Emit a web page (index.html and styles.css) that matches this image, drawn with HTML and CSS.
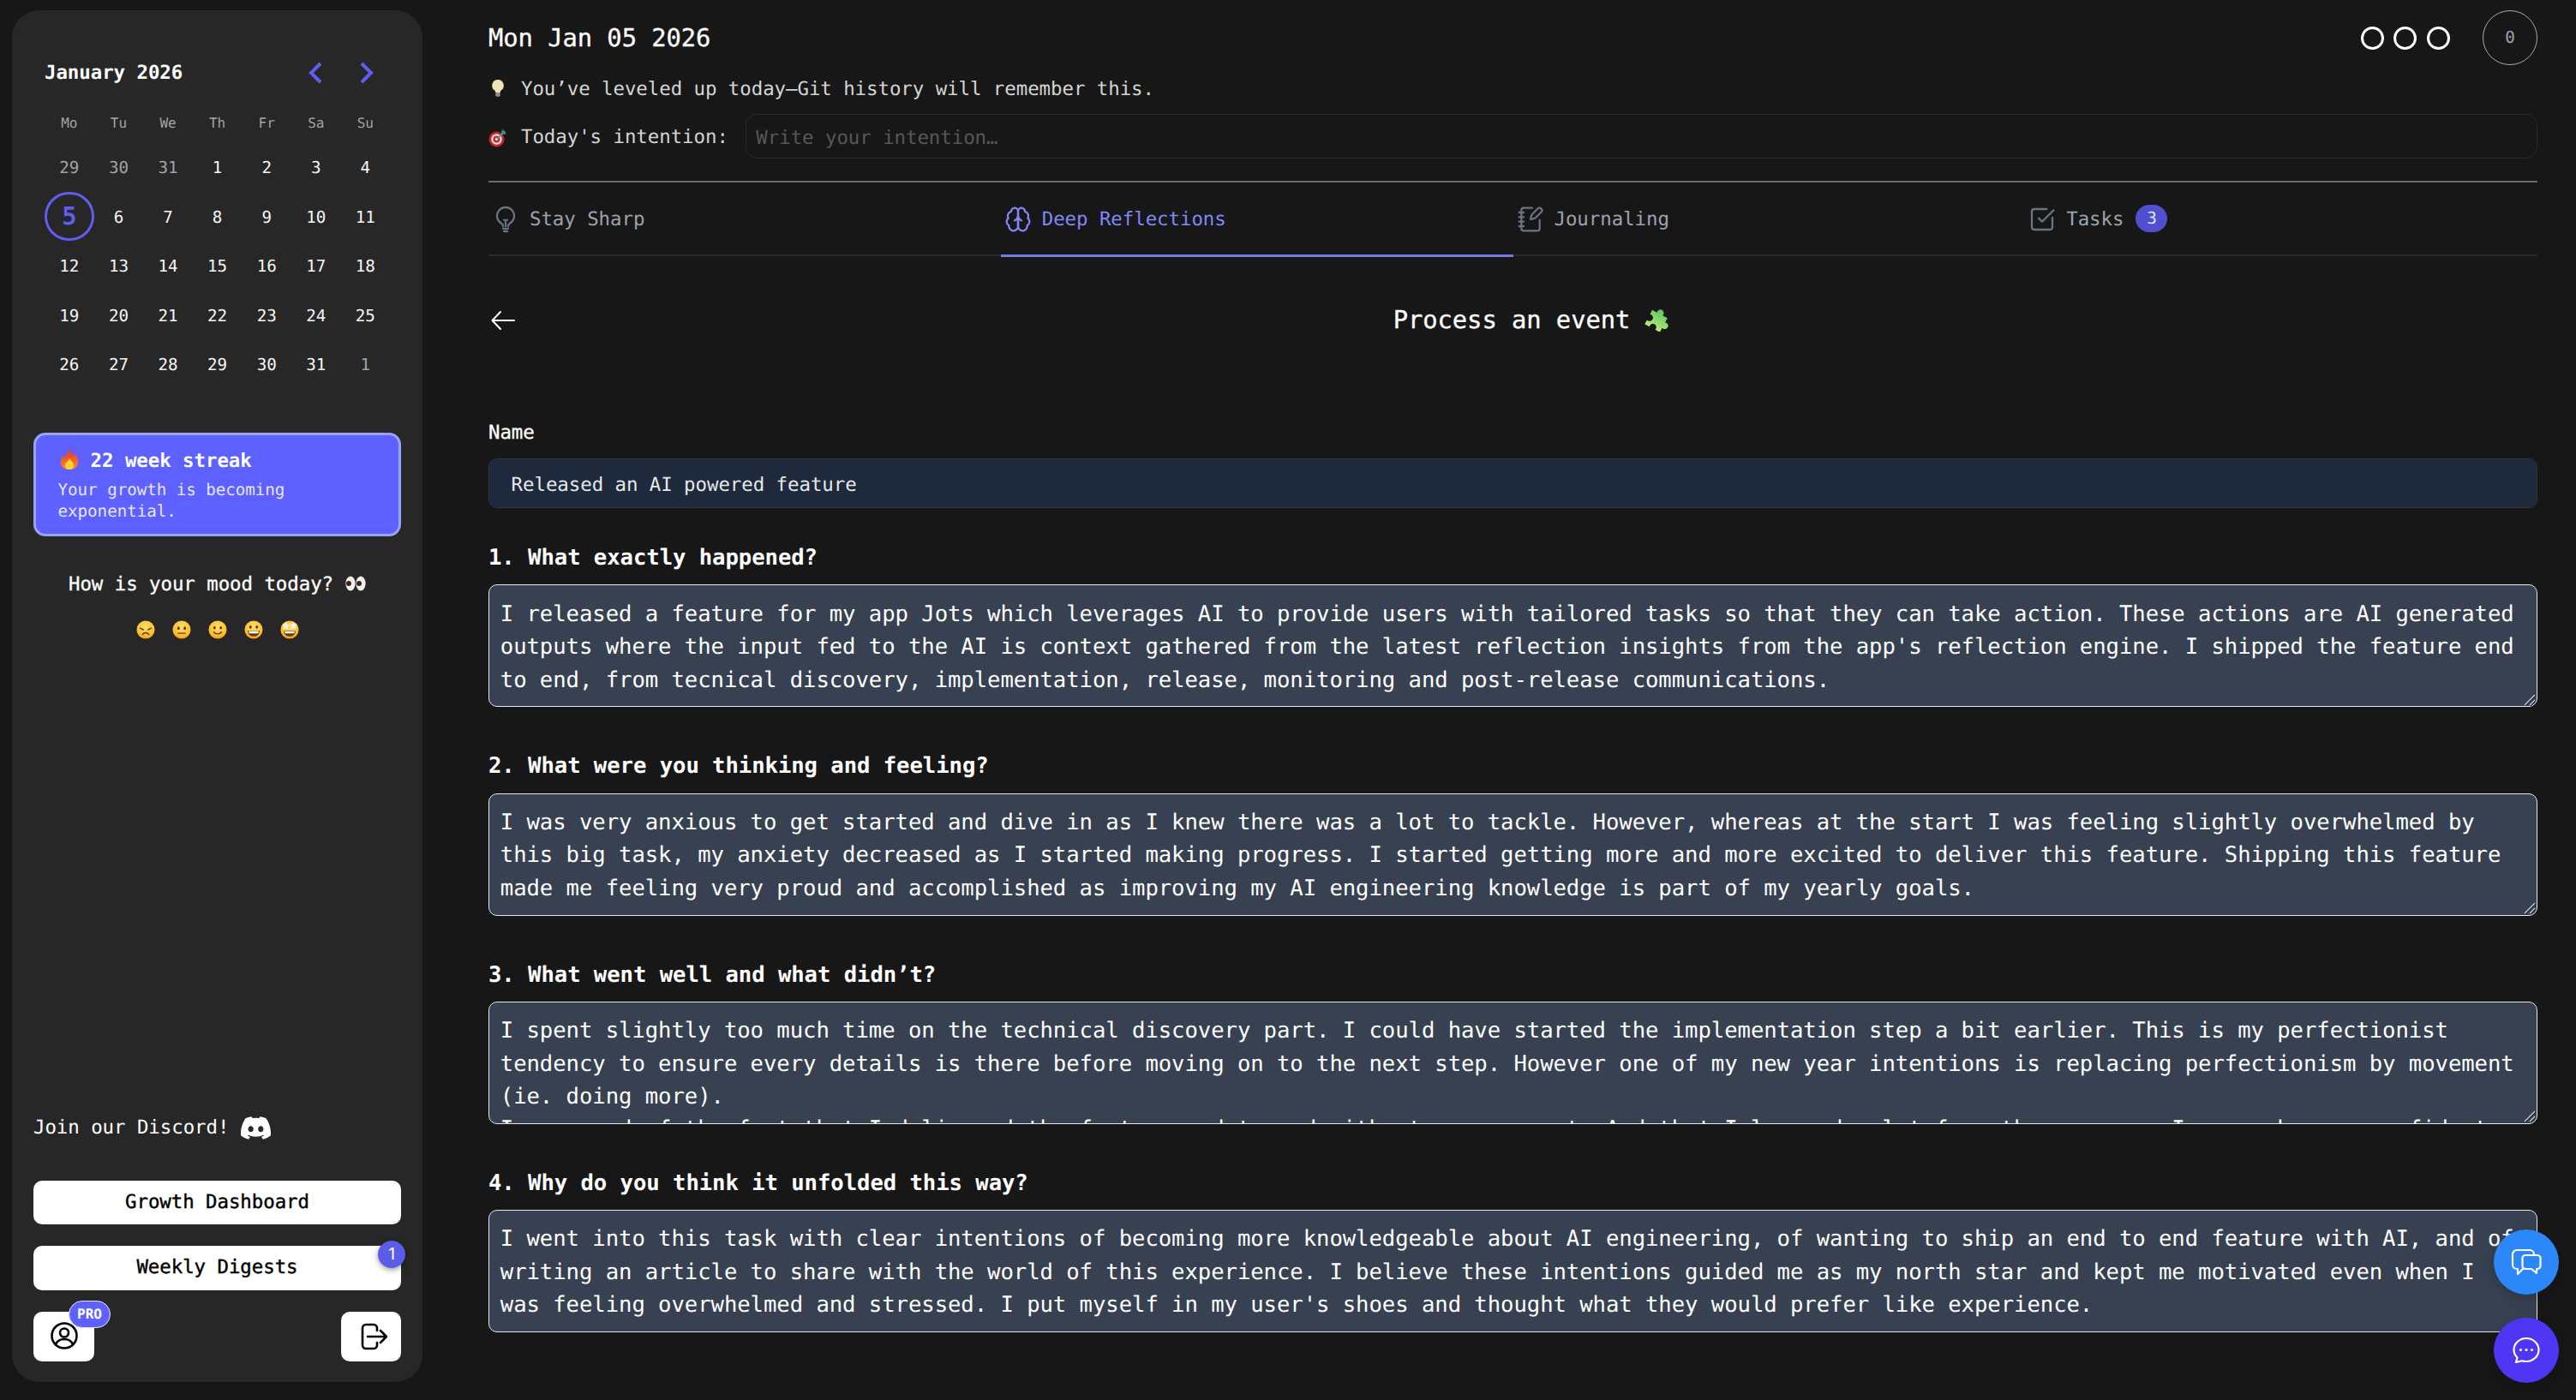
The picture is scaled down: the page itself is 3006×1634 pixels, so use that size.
FILE: index.html
```html
<!DOCTYPE html>
<html lang="en">
<head>
<meta charset="utf-8">
<title>Jots</title>
<link rel="stylesheet" href="styles.css">
</head>
<body>
<svg class="defs" width="0" height="0" aria-hidden="true">
  <defs>
    <radialGradient id="face" cx="50%" cy="35%" r="70%"><stop offset="0" stop-color="#ffdf6b"/><stop offset="0.7" stop-color="#fbbf2e"/><stop offset="1" stop-color="#e88f12"/></radialGradient>
    <linearGradient id="flame" x1="0" y1="0" x2="0" y2="1"><stop offset="0" stop-color="#e8391f"/><stop offset="1" stop-color="#ff8a1f"/></linearGradient>
    <linearGradient id="piece" x1="0" y1="0" x2="0" y2="1"><stop offset="0" stop-color="#5fc163"/><stop offset="1" stop-color="#b4ee72"/></linearGradient>
    <symbol id="grip" viewBox="0 0 14 14"><path d="M1 13 13 1M7 13l6-6" fill="none" stroke="#c9ccd2" stroke-width="1.300"/><path d="M2 14 14 2M8 14l6-6" fill="none" stroke="#1f2733" stroke-width="1"/></symbol>
  </defs>
</svg>
<aside class="sidebar">
  <section class="calendar">
    <div class="cal-head">
      <span class="cal-title">January 2026</span>
      <div class="cal-nav">
        <svg class="chev" viewBox="0 0 18 26"><path d="M15 2 4 13l11 11"/></svg>
        <svg class="chev" viewBox="0 0 18 26"><path d="m3 2 11 11L3 24"/></svg>
      </div>
    </div>
    <div class="cal-grid">
      <span class="wd">Mo</span><span class="wd">Tu</span><span class="wd">We</span><span class="wd">Th</span><span class="wd">Fr</span><span class="wd">Sa</span><span class="wd">Su</span>
      <span class="day out">29</span><span class="day out">30</span><span class="day out">31</span><span class="day">1</span><span class="day">2</span><span class="day">3</span><span class="day">4</span>
      <span class="day today">5</span><span class="day">6</span><span class="day">7</span><span class="day">8</span><span class="day">9</span><span class="day">10</span><span class="day">11</span>
      <span class="day">12</span><span class="day">13</span><span class="day">14</span><span class="day">15</span><span class="day">16</span><span class="day">17</span><span class="day">18</span>
      <span class="day">19</span><span class="day">20</span><span class="day">21</span><span class="day">22</span><span class="day">23</span><span class="day">24</span><span class="day">25</span>
      <span class="day">26</span><span class="day">27</span><span class="day">28</span><span class="day">29</span><span class="day">30</span><span class="day">31</span><span class="day out">1</span>
    </div>
  </section>
  <section class="streak">
    <div class="streak-title">
      <svg class="em-fire" viewBox="0 0 22 26"><path fill="url(#flame)" d="M11 1c1 4 3 5 5 8 1-1 1-2 1-3 3 3 4 7 4 10 0 6-4 9-10 9S1 22 1 16c0-4 2-6 4-8 0 2 0 3 1 4 1-4 3-7 5-11z"/><path fill="#ffd23f" d="M11 12c1 2 5 5 5 8 0 3-2 5-5 5s-5-2-5-5c0-3 4-5 5-8z"/></svg>
      <span>22 week streak</span>
    </div>
    <p class="streak-sub">Your growth is becoming exponential.</p>
  </section>
  <section class="mood">
    <div class="mood-title">How is your mood today?
      <svg class="em-eyes" viewBox="0 0 24 18"><ellipse cx="6" cy="9" rx="5.6" ry="8.6" fill="#f4f1ec"/><ellipse cx="18" cy="9" rx="5.6" ry="8.6" fill="#f4f1ec"/><circle cx="4" cy="9" r="3" fill="#3a2418"/><circle cx="16" cy="9" r="3" fill="#3a2418"/></svg>
    </div>
    <div class="mood-faces">
      <svg class="face" viewBox="0 0 24 24"><circle cx="12" cy="12" r="11.5" fill="url(#face)"/><path d="M5 10l4 2M19 10l-4 2M8 18c2-3 6-3 8 0" fill="none" stroke="#6b3a0a" stroke-width="1.6" stroke-linecap="round"/></svg>
      <svg class="face" viewBox="0 0 24 24"><circle cx="12" cy="12" r="11.5" fill="url(#face)"/><ellipse cx="8" cy="10" rx="1.5" ry="2" fill="#5a300a"/><ellipse cx="16" cy="10" rx="1.5" ry="2" fill="#5a300a"/><path d="M7.5 16.5h9" stroke="#6b3a0a" stroke-width="1.6" stroke-linecap="round"/></svg>
      <svg class="face" viewBox="0 0 24 24"><circle cx="12" cy="12" r="11.5" fill="url(#face)"/><ellipse cx="8" cy="9.5" rx="1.5" ry="2" fill="#5a300a"/><ellipse cx="16" cy="9.5" rx="1.5" ry="2" fill="#5a300a"/><path d="M7 15c2 3 8 3 10 0" fill="none" stroke="#6b3a0a" stroke-width="1.5" stroke-linecap="round"/></svg>
      <svg class="face" viewBox="0 0 24 24"><circle cx="12" cy="12" r="11.5" fill="url(#face)"/><ellipse cx="8" cy="8.5" rx="1.5" ry="2" fill="#5a300a"/><ellipse cx="16" cy="8.5" rx="1.5" ry="2" fill="#5a300a"/><path d="M4.5 13h15c0 5-3.5 7.5-7.5 7.5S4.500 18 4.500 13z" fill="#6b3a0a"/><path d="M5.500 13.700h13c-.1 1.300-.4 2-.9 2.800H6.400c-.5-.8-.8-1.500-.9-2.800z" fill="#fff"/></svg>
      <svg class="face star" viewBox="0 0 24 24"><circle cx="12" cy="12" r="11.500" fill="url(#face)"/><path d="M4.500 13.500h15c0 4.500-3.500 7-7.500 7s-7.500-2.500-7.500-7z" fill="#6b3a0a"/><path d="M5.500 14.200h13c-.2 1-.5 1.600-1 2.300h-11c-.5-.7-.8-1.300-1-2.300z" fill="#fff"/><path d="M7 2l1.500 3 3.500.5-2.500 2.500.600 3.500L7 10l-3 1.500.6-3.500L2 5.500 5.500 5zM17 2l1.500 3 3.500.5-2.500 2.500.6 3.500-3.100-1.500-3 1.500.6-3.500L12 5.500l3.500-.5z" fill="#f6f3e8"/></svg>
    </div>
  </section>
  <div class="discord">
    <span>Join our Discord!</span>
    <svg class="discord-ico" viewBox="0 0 24 24"><path d="M20.317 4.37a19.791 19.791 0 0 0-4.885-1.515.074.074 0 0 0-.079.037c-.21.375-.444.864-.608 1.25a18.27 18.27 0 0 0-5.487 0 12.64 12.64 0 0 0-.617-1.25.077.077 0 0 0-.079-.037A19.736 19.736 0 0 0 3.677 4.37a.07.07 0 0 0-.032.027C.533 9.046-.32 13.58.099 18.057a.082.082 0 0 0 .031.057 19.9 19.9 0 0 0 5.993 3.03.078.078 0 0 0 .084-.028 14.09 14.09 0 0 0 1.226-1.994.076.076 0 0 0-.041-.106 13.107 13.107 0 0 1-1.872-.892.077.077 0 0 1-.008-.128 10.2 10.2 0 0 0 .372-.292.074.074 0 0 1 .077-.01c3.928 1.793 8.18 1.793 12.062 0a.074.074 0 0 1 .078.01c.12.098.246.198.373.292a.077.077 0 0 1-.006.127 12.299 12.299 0 0 1-1.873.892.077.077 0 0 0-.041.107c.36.698.772 1.362 1.225 1.993a.076.076 0 0 0 .084.028 19.839 19.839 0 0 0 6.002-3.03.077.077 0 0 0 .032-.054c.5-5.177-.838-9.674-3.549-13.66a.061.061 0 0 0-.031-.03zM8.02 15.33c-1.183 0-2.157-1.085-2.157-2.419 0-1.333.956-2.419 2.157-2.419 1.21 0 2.176 1.096 2.157 2.42 0 1.333-.956 2.418-2.157 2.418zm7.975 0c-1.183 0-2.157-1.085-2.157-2.419 0-1.333.955-2.419 2.157-2.419 1.21 0 2.176 1.096 2.157 2.42 0 1.333-.946 2.418-2.157 2.418z"/></svg>
  </div>
  <button class="wide-btn">Growth Dashboard</button>
  <button class="wide-btn digests">Weekly Digests<span class="notif">1</span></button>
  <div class="bottom-row">
    <button class="icon-btn profile">
      <svg class="btn-ico" viewBox="0 0 32 32"><circle cx="16" cy="16" r="14.500"/><circle cx="16" cy="12.500" r="5"/><path d="M6 26c2-4.500 6-6 10-6s8 1.500 10 6"/></svg>
      <span class="pro">PRO</span>
    </button>
    <button class="icon-btn logout">
      <svg class="btn-ico" viewBox="0 0 32 32"><path d="M20 9V6a4 4 0 0 0-4-4H7a4 4 0 0 0-4 4v20a4 4 0 0 0 4 4h9a4 4 0 0 0 4-4v-3"/><path d="M9 16h22M24 9l7 7-7 7"/></svg>
    </button>
  </div>
</aside>

<main class="main">
  <header class="top">
    <h1 class="date">Mon Jan 05 2026</h1>
    <div class="top-right">
      <span class="ring"></span><span class="ring"></span><span class="ring"></span>
      <span class="counter">0</span>
    </div>
  </header>
  <p class="quote">
    <svg class="em-small" viewBox="0 0 22 24"><path d="M11 1a7.500 7.500 0 0 0-4 13.800c.8.700 1 1.700 1 2.700h6c0-1 .2-2 1-2.700A7.500 7.500 0 0 0 11 1z" fill="#efe3b4"/><rect x="8" y="17.500" width="6" height="5" rx="1.500" fill="#8d8d86"/></svg>
    <span>You’ve leveled up today—Git history will remember this.</span>
  </p>
  <div class="intention">
    <svg class="em-small" viewBox="0 0 22 22"><circle cx="9.500" cy="12.500" r="9" fill="#c8242c"/><circle cx="9.500" cy="12.500" r="6.200" fill="#f2e8e0"/><circle cx="9.500" cy="12.500" r="4" fill="#c8242c"/><circle cx="9.500" cy="12.500" r="1.700" fill="#f2e8e0"/><path d="M10 12 19 3" stroke="#4d9aa3" stroke-width="2"/><path d="m17 1 1 3 3 1-2 2-3-1-1-3z" fill="#3f8f9a"/></svg>
    <label class="intention-label" for="intent">Today's intention:</label>
    <input class="intention-input" id="intent" placeholder="Write your intention…">
  </div>
  <hr class="divider">
  <nav class="tabs">
    <a class="tab">
      <svg class="tab-ico" viewBox="0 0 24 24"><path d="M12 18v-5.250m0 0a6.010 6.010 0 0 0 1.500-.189m-1.500.189a6.010 6.010 0 0 1-1.500-.189m3.750 7.478a12.060 12.060 0 0 1-4.500 0m3.750 2.383a14.406 14.406 0 0 1-3 0M14.250 18v-.192c0-.983.658-1.823 1.508-2.316a7.500 7.500 0 1 0-7.517 0c.85.493 1.509 1.333 1.509 2.316V18"/></svg>
      <span>Stay Sharp</span>
    </a>
    <a class="tab active">
      <svg class="tab-ico" viewBox="0 0 24 24"><path d="M12 5a3 3 0 1 0-5.997.125 4 4 0 0 0-2.526 5.770 4 4 0 0 0 .556 6.588A4 4 0 1 0 12 18Z"/><path d="M12 5a3 3 0 1 1 5.997.125 4 4 0 0 1 2.526 5.770 4 4 0 0 1-.556 6.588A4 4 0 1 1 12 18Z"/><path d="M15 13a4.500 4.500 0 0 1-3-4 4.500 4.500 0 0 1-3 4"/><path d="M12 9v9"/></svg>
      <span>Deep Reflections</span>
    </a>
    <a class="tab">
      <svg class="tab-ico" viewBox="0 0 24 24"><path d="M13.400 2H6a2 2 0 0 0-2 2v16a2 2 0 0 0 2 2h12a2 2 0 0 0 2-2v-7.400"/><path d="M2 6h4M2 10h4M2 14h4M2 18h4"/><path d="M21.378 5.626a1 1 0 1 0-3.004-3.004l-5.010 5.012a2 2 0 0 0-.506.854l-.837 2.870a.5.5 0 0 0 .62.62l2.870-.837a2 2 0 0 0 .854-.506z"/></svg>
      <span>Journaling</span>
    </a>
    <a class="tab">
      <svg class="tab-ico" viewBox="0 0 24 24"><path d="M21 10.500V19a2 2 0 0 1-2 2H5a2 2 0 0 1-2-2V5a2 2 0 0 1 2-2h11"/><path d="m9 11 3 3L22 4"/></svg>
      <span>Tasks</span><span class="tab-badge">3</span>
    </a>
  </nav>

  <div class="page-title">
    <span class="back"><svg class="back-ico" viewBox="0 0 28 24"><path d="M11 2 1.500 12 11 22M1.500 12H27"/></svg></span>
    <h2 class="title-text">Process an event
      <svg class="em-puzzle" viewBox="3 3 24 24"><g transform="rotate(28 15 15)"><path d="M7 10h5a3.200 3.200 0 1 1 6 0h5v4.500a3.200 3.200 0 1 1 0 6V25h-5a3.200 3.200 0 1 0-6 0H7v-4.500a3.200 3.200 0 1 0 0-6z" fill="url(#piece)"/></g></svg>
    </h2>
  </div>

  <label class="name-label" for="name">Name</label>
  <input class="name-input" id="name" value="Released an AI powered feature">

  <div class="qa first">
    <label class="q">1. What exactly happened?</label>
    <div class="a-wrap">
      <textarea class="a" spellcheck="false">I released a feature for my app Jots which leverages AI to provide users with tailored tasks so that they can take action. These actions are AI generated outputs where the input fed to the AI is context gathered from the latest reflection insights from the app's reflection engine. I shipped the feature end to end, from tecnical discovery, implementation, release, monitoring and post-release communications.</textarea>
      <svg class="grip"><use href="#grip"/></svg>
    </div>
  </div>
  <div class="qa">
    <label class="q">2. What were you thinking and feeling?</label>
    <div class="a-wrap">
      <textarea class="a" spellcheck="false">I was very anxious to get started and dive in as I knew there was a lot to tackle. However, whereas at the start I was feeling slightly overwhelmed by this big task, my anxiety decreased as I started making progress. I started getting more and more excited to deliver this feature. Shipping this feature made me feeling very proud and accomplished as improving my AI engineering knowledge is part of my yearly goals.</textarea>
      <svg class="grip"><use href="#grip"/></svg>
    </div>
  </div>
  <div class="qa">
    <label class="q">3. What went well and what didn’t?</label>
    <div class="a-wrap">
      <textarea class="a" spellcheck="false">I spent slightly too much time on the technical discovery part. I could have started the implementation step a bit earlier. This is my perfectionist tendency to ensure every details is there before moving on to the next step. However one of my new year intentions is replacing perfectionism by movement (ie. doing more).
I am proud of the fact that I delivered the feature end to end without any support. And that I learned a lot from the process. I am much more confident.</textarea>
      <svg class="grip"><use href="#grip"/></svg>
    </div>
  </div>
  <div class="qa">
    <label class="q">4. Why do you think it unfolded this way?</label>
    <div class="a-wrap">
      <textarea class="a" spellcheck="false">I went into this task with clear intentions of becoming more knowledgeable about AI engineering, of wanting to ship an end to end feature with AI, and of writing an article to share with the world of this experience. I believe these intentions guided me as my north star and kept me motivated even when I was feeling overwhelmed and stressed. I put myself in my user's shoes and thought what they would prefer like experience.</textarea>
      <svg class="grip"><use href="#grip"/></svg>
    </div>
  </div>
</main>

<button class="fab fab-blue">
  <svg class="fab-ico" viewBox="0 0 36 32"><path d="M27 8V7a5 5 0 0 0-5-5H7a5 5 0 0 0-5 5v12a5 5 0 0 0 5 5h1v6l6-6"/><path d="M17 8h14a3.500 3.500 0 0 1 3.500 3.500v9A3.500 3.500 0 0 1 31 24h-1v5l-6-5h-7a3.500 3.500 0 0 1-3.500-3.500v-9A3.500 3.500 0 0 1 17 8z"/></svg>
</button>
<button class="fab fab-purple">
  <svg class="fab-ico chat" viewBox="0 0 32 32"><path d="M16 2c8 0 14.500 6 14.500 13.500S24 29 16 29c-2 0-3.500-.3-5-.8L4 30l1.500-5.500C3 22 1.500 19 1.500 15.500 1.500 8 8 2 16 2z"/><path class="dots" d="M9.500 15.500h.01M16 15.500h.01M22.500 15.500h.01"/></svg>
</button>
</body>
</html>
```

FILE: styles.css
```css
html { color-scheme: dark; height: 1634px; overflow: hidden; }
* { box-sizing: border-box; }
body {
  margin: 0;
  width: 3006px;
  height: 1634px;
  overflow: hidden;
  display: flex;
  align-items: flex-start;
  background: #171717;
  color: #fff;
  font-family: "DejaVu Sans Mono", "Liberation Mono", monospace;
  font-size: 22.4px;
  line-height: 33.6px;
  letter-spacing: -0.045px;
  text-rendering: geometricPrecision;
}
button, input, textarea { font: inherit; letter-spacing: inherit; text-rendering: inherit; }
.defs { position: absolute; }

/* sidebar */
.sidebar {
  flex: none;
  width: 479px;
  height: 1601px;
  margin: 12px 0 0 14px;
  padding: 55px 25px 24px;
  background: #272727;
  border-radius: 32px;
  display: flex;
  flex-direction: column;
}
.calendar { padding: 0 13px; }
.cal-head { display: flex; justify-content: space-between; align-items: center; height: 36px; }
.cal-title { font-weight: 700; padding-top: 1px; }
.cal-nav { display: flex; gap: 42px; margin-right: 18px; }
.chev { width: 18px; height: 26px; fill: none; stroke: #5e5ff0; stroke-width: 4; }
.cal-grid {
  margin-top: 17px;
  display: grid;
  grid-template-columns: repeat(7, 57.6px);
  grid-template-rows: 46px repeat(5, 57.6px);
}
.wd, .day { display: flex; align-items: center; justify-content: center; }
.wd { font-size: 16px; color: #a3a3a3; padding-top: 1px; }
.day { font-size: 19.2px; color: #f5f5f5; padding-top: 2px; }
.day.out { color: #a3a3a3; }
.day.today {
  padding-top: 0;
  border: 3.2px solid #5e5ff0;
  border-radius: 50%;
  color: #5e5ff0;
  font-size: 28.8px;
  font-weight: 700;
}
.streak {
  margin-top: 51px;
  height: 121px;
  padding: 14px 25.6px 0;
  background: #5e60ff;
  border: 3.2px solid #9aa3f2;
  border-radius: 14px;
}
.streak-title { display: flex; align-items: center; gap: 14px; font-weight: 700; }
.em-fire { width: 22px; height: 26px; flex: none; margin: -5px 0 0 2px; }
.streak-sub { margin: 3px 0 0; font-size: 19.2px; line-height: 25.6px; color: #e6e6ff; width: 300px; }
.mood { margin-top: 38px; text-align: center; }
.mood-title { display: flex; justify-content: center; align-items: center; gap: 14px; padding-top: 2px; margin-bottom: -2px; -webkit-text-stroke: .3px #fff; }
.em-eyes { width: 24px; height: 18px; margin-top: -4px; }
.mood-faces { margin-top: 22px; display: flex; justify-content: center; align-items: center; gap: 20px; height: 30px; }
.face { width: 22px; height: 22px; }
.discord { margin-top: auto; display: flex; align-items: center; gap: 14px; }
.discord-ico { width: 35px; height: 35px; fill: #fff; }
.wide-btn {
  position: relative;
  border: 0;
  background: #fff;
  color: #000;
  -webkit-text-stroke: .4px #000;
  border-radius: 10px;
  height: 51px;
  padding: 0;
  width: 100%;
  margin-top: 44px;
}
.wide-btn.digests { margin-top: 25px; height: 52px; }
.notif {
  position: absolute;
  right: -5px;
  top: -6px;
  width: 32px;
  height: 32px;
  border-radius: 50%;
  background: #5b5de8;
  color: #fff;
  -webkit-text-stroke: 0;
  font: 19px/32px "Inter", sans-serif;
  text-align: center;
  box-shadow: 0 2px 6px rgba(0, 0, 0, .4);
}
.bottom-row { margin-top: 25px; display: flex; justify-content: space-between; }
.icon-btn {
  position: relative;
  width: 71px;
  height: 58px;
  padding: 0;
  border: 0;
  background: #fff;
  border-radius: 10px;
  display: flex;
  align-items: center;
  justify-content: center;
}
.logout { width: 70px; }
.btn-ico { width: 32px; height: 32px; fill: none; stroke: #000; stroke-width: 2.6; stroke-linecap: round; stroke-linejoin: round; }
.profile .btn-ico { margin-top: -2px; }
.logout .btn-ico { margin-left: 6px; }
.pro {
  position: absolute;
  left: 41px;
  top: -13px;
  width: 49px;
  height: 32px;
  border-radius: 16px;
  border: 1.5px solid #e4e4ff;
  background: #5e60ff;
  color: #fff;
  font-size: 16px;
  font-weight: 700;
  line-height: 29px;
  text-align: center;
}

/* main */
.main { flex: none; width: 2391px; margin: 12px 0 0 77px; }
.top { display: flex; justify-content: space-between; align-items: center; height: 64px; }
.date { margin: 0; font-size: 28.8px; font-weight: 400; line-height: 44px; -webkit-text-stroke: .3px #fff; }
.top-right { display: flex; align-items: center; gap: 11.500px; }
.ring { width: 27px; height: 27px; border: 3.2px solid #fff; border-radius: 50%; }
.counter {
  width: 64px;
  height: 64px;
  margin-left: 27px;
  border: 1.6px solid #a8a8a8;
  border-radius: 50%;
  color: #9ca3af;
  font-size: 19.2px;
  display: flex;
  align-items: center;
  justify-content: center;
}
.quote { margin: 11px 0 0; padding-top: 2px; height: 33.6px; display: flex; align-items: center; gap: 16px; color: #d4d4d4; }
.quote .em-small { margin-top: -4px; }
.em-small { width: 22px; height: 22px; flex: none; }
.intention { margin-top: 12px; height: 52px; display: flex; align-items: center; gap: 16px; color: #d4d4d4; }
.intention .em-small { margin-top: 4px; }
.intention-label { flex: none; padding-top: 5px; margin-right: 4px; }
.intention-input {
  flex: 1;
  height: 52px;
  padding: 5px 11.500px 0;
  background: transparent;
  border: 1.6px solid #2a2a2a;
  border-radius: 13px;
  color: #fff;
  outline: 0;
}
.intention-input::placeholder { color: #575757; opacity: 1; }
.divider { margin: 26px 0 0; border: 0; height: 2px; background: #6a6a6a; }
.tabs {
  height: 86px;
  display: grid;
  grid-template-columns: repeat(4, 1fr);
  border-bottom: 2px solid #2a2a2a;
}
.tab {
  display: flex;
  align-items: center;
  height: 85px;
  padding: 3px 4px 0;
  gap: 12px;
  color: #9ca3af;
  position: relative;
}
.tab-ico { width: 32px; height: 32px; margin-top: -2px; fill: none; stroke: #6b7280; stroke-width: 1.700; stroke-linecap: round; stroke-linejoin: round; flex: none; }
.tab.active { color: #8187f5; }
.tab.active .tab-ico { stroke: #8187f5; }
.tab.active::after {
  content: "";
  position: absolute;
  left: 0;
  right: 0;
  bottom: -2.500px;
  height: 3.200px;
  background: #7478e8;
}
.tab-badge {
  width: 37px;
  height: 32px;
  margin-left: 2px;
  margin-top: -3px;
  border-radius: 16px;
  background: #4f4fd0;
  color: #e5e5ff;
  font-size: 19.2px;
  display: flex;
  align-items: center;
  justify-content: center;
}
.page-title { margin-top: 52px; display: flex; align-items: center; height: 44px; }
.back { flex: none; width: 44px; padding-top: 3px; }
.back-ico { display: block; margin-left: 3px; width: 28px; height: 24px; fill: none; stroke: #fff; stroke-width: 2; stroke-linecap: round; stroke-linejoin: round; }
.title-text { flex: 1; margin: 0; display: flex; align-items: center; justify-content: center; gap: 17px; font-size: 28.8px; font-weight: 400; line-height: 44px; -webkit-text-stroke: .3px #fff; }
.em-puzzle { width: 30px; height: 30px; margin-top: -2px; }
.name-label { display: block; margin-top: 92px; padding-top: 2px; margin-bottom: -2px; -webkit-text-stroke: .3px #fff; }
.name-input {
  display: block;
  width: 100%;
  height: 58px;
  margin-top: 15px;
  padding: 3px 25.600px 0;
  background: #1e293b;
  border: 1.6px solid #293548;
  border-radius: 10px;
  color: #e5e7eb;
  outline: 0;
}
.qa { margin-top: 49px; }
.qa.first { margin-top: 38px; }
.q { display: block; font-size: 25.600px; line-height: 38.400px; font-weight: 700; letter-spacing: -0.05px; padding-top: 1px; margin-bottom: -1px; }
.a-wrap { position: relative; margin-top: 12.800px; }
.a {
  display: block;
  width: 100%;
  height: 143px;
  padding: 14.400px 18px 0 12.800px;
  font-size: 25.600px;
  line-height: 38.400px;
  letter-spacing: -0.05px;
  background: #374151;
  border: 1.600px solid #e5e7eb;
  border-radius: 10px;
  color: #fff;
  overflow: hidden;
  resize: none;
  outline: 0;
}
.grip { position: absolute; right: 1.600px; bottom: 1.600px; width: 14px; height: 14px; }

/* floating buttons */
.fab {
  position: absolute;
  left: 2910px;
  width: 76px;
  height: 76px;
  padding: 0;
  border: 0;
  border-radius: 50%;
  display: flex;
  align-items: center;
  justify-content: center;
  box-shadow: 0 4px 14px rgba(0, 0, 0, .18);
}
.fab-blue { top: 1435px; background: #2c87f9; }
.fab-purple { top: 1538px; background: #4f36f5; }
.fab-ico { width: 36px; height: 32px; fill: none; stroke: #fff; stroke-width: 2.200; stroke-linejoin: round; stroke-linecap: round; }
.fab-ico.chat { width: 32px; height: 32px; }
.dots { stroke-width: 3.200; }
```
